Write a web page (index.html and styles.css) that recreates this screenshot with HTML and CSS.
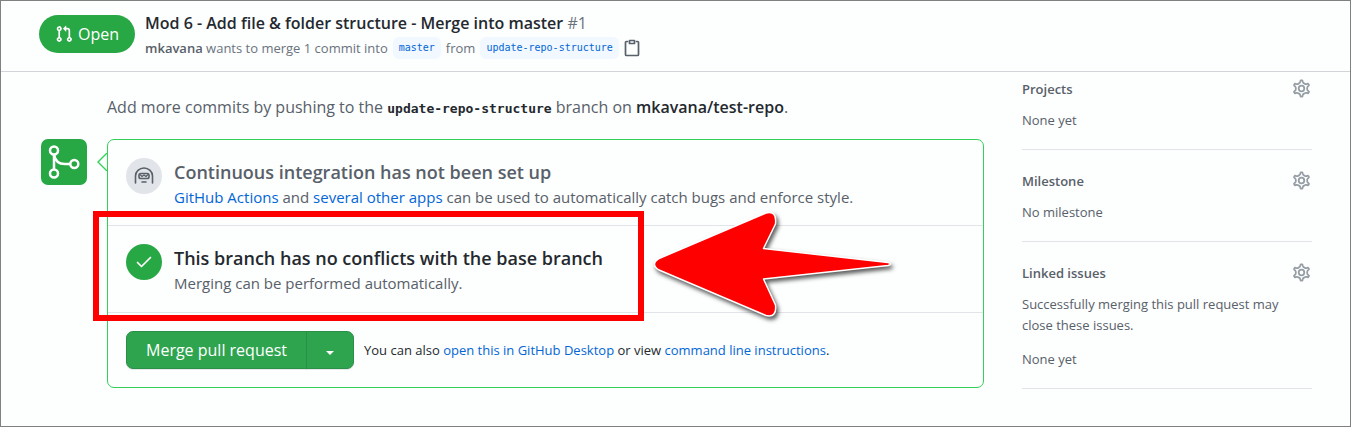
FILE: index.html
```html
<!DOCTYPE html>
<html lang="en">
<head>
<meta charset="utf-8">
<meta name="viewport" content="width=device-width, initial-scale=1">
<title>Mod 6 - Add file &amp; folder structure - Merge into master #1</title>
<link rel="stylesheet" href="styles.css">
</head>
<body>
<svg class="defs" aria-hidden="true">
  <symbol id="gear" viewBox="0.5 0.5 15 15">
    <path fill="none" stroke="currentColor" stroke-width="1.4" d="M7.429 1.525a6.593 6.593 0 011.142 0c.036.003.108.036.137.146l.289 1.105c.147.56.55.967.997 1.189.174.086.341.183.501.29.417.278.97.423 1.53.27l1.102-.303c.11-.03.175.016.195.046.219.31.41.641.573.989.014.031.022.11-.059.19l-.815.806c-.411.406-.562.957-.53 1.456a4.588 4.588 0 010 .582c-.032.499.119 1.05.53 1.456l.815.806c.08.08.073.159.059.19a6.494 6.494 0 01-.573.99c-.02.029-.086.074-.195.045l-1.103-.303c-.559-.153-1.112-.008-1.529.27-.16.107-.327.204-.5.29-.449.222-.851.628-.998 1.189l-.289 1.105c-.029.11-.101.143-.137.146a6.613 6.613 0 01-1.142 0c-.036-.003-.108-.037-.137-.146l-.289-1.105c-.147-.56-.55-.967-.997-1.189a4.502 4.502 0 01-.501-.29c-.417-.278-.97-.423-1.53-.27l-1.102.303c-.11.03-.175-.016-.195-.046a6.492 6.492 0 01-.573-.989c-.014-.031-.022-.11.059-.19l.815-.806c.411-.406.562-.957.53-1.456a4.587 4.587 0 010-.582c.032-.499-.119-1.05-.53-1.456l-.815-.806c-.08-.08-.073-.159-.059-.19a6.44 6.44 0 01.573-.99c.02-.029.086-.075.195-.045l1.103.303c.559.153 1.112.008 1.529-.27.16-.107.327-.204.5-.29.449-.222.851-.628.998-1.189l.289-1.105c.029-.11.101-.143.137-.146z"/>
    <circle cx="8" cy="8" r="2.2" fill="none" stroke="currentColor" stroke-width="1.4"/>
  </symbol>
</svg>
<div class="page">
  <header class="pr-header">
    <span class="state">
      <svg width="18" height="18" viewBox="0 0 16 16" fill="currentColor" aria-hidden="true"><path fill-rule="evenodd" d="M7.177 3.073L9.573.677A.25.25 0 0110 .854v4.792a.25.25 0 01-.427.177L7.177 3.427a.25.25 0 010-.354zM3.75 2.5a.75.75 0 100 1.5.75.75 0 000-1.5zm-2.25.75a2.25 2.25 0 113 2.122v5.256a2.251 2.251 0 11-1.5 0V5.372A2.25 2.25 0 011.5 3.25zM11 2.5h-1V4h1a1 1 0 011 1v5.628a2.251 2.251 0 101.5 0V5A2.5 2.5 0 0011 2.5zm1 10.25a.75.75 0 111.5 0 .75.75 0 01-1.5 0zM3.75 12a.75.75 0 100 1.5.75.75 0 000-1.5z"/></svg>
      Open
    </span>
    <div class="pr-summary">
      <h1 class="pr-title">Mod 6 - Add file &amp; folder structure - Merge into master <span class="pr-number">#1</span></h1>
      <div class="pr-meta">
        <span><a class="author" href="#">mkavana</a> wants to merge 1 commit into</span>
        <a class="branch" href="#">master</a>
        <span>from</span>
        <a class="branch" href="#">update-repo-structure</a>
        <button class="icon-button copy" type="button" aria-label="Copy branch name">
          <svg width="16" height="18" viewBox="0 0 16 18" fill="none" stroke="currentColor" stroke-width="1.7" stroke-linejoin="round" stroke-linecap="round" aria-hidden="true"><path d="M3.5 2.5H2.5Q1.5 2.5 1.5 3.5V15.5Q1.5 16.5 2.5 16.5H13.5Q14.5 16.5 14.5 15.5V3.5Q14.5 2.5 13.5 2.5H12.5"/><path d="M5.5 1.5H10.5V4.5H5.5Z"/></svg>
        </button>
      </div>
    </div>
  </header>
  <div class="columns">
    <main class="discussion">
      <p class="push-hint">Add more commits by pushing to the <code>update-repo-structure</code> branch on <a href="#">mkavana/test-repo</a>.</p>
      <div class="merge">
        <span class="merge-badge">
          <svg width="46" height="46" viewBox="0 0 46 46" fill="none" stroke="currentColor" stroke-width="2.5" aria-hidden="true"><circle cx="13" cy="11.5" r="4"/><circle cx="13" cy="34.5" r="4"/><circle cx="33.3" cy="25" r="4"/><path d="M13 15.5V30.5M13 15.5Q14.5 25 24 25H29.3"/></svg>
        </span>
        <section class="merge-box">
          <svg class="caret" width="10" height="18" viewBox="0 0 10 18" aria-hidden="true"><path d="M10 0L1 9L10 18" fill="#fdfefe" stroke="#34d058" stroke-width="1.4"/></svg>
          <div class="status compact">
            <span class="status-icon muted">
              <svg width="20" height="18" viewBox="0 0 20 18" fill="none" stroke="currentColor" stroke-width="1.6" stroke-linecap="round" stroke-linejoin="round" aria-hidden="true"><path d="M1.5 16V9A8 7.5 0 0 1 18.5 9V16"/><rect x="5" y="6.5" width="10" height="5" rx="1.8"/><path d="M6.5 8L8 9.5L10 8L12 9.5L13.5 8" stroke-width="1.3"/><path d="M8 15H12"/></svg>
            </span>
            <div>
              <h2 class="status-title soft">Continuous integration has not been set up</h2>
              <p class="status-text"><a href="#">GitHub Actions</a> and <a href="#">several other apps</a> can be used to automatically catch bugs and enforce style.</p>
            </div>
          </div>
          <div class="status marked">
            <span class="status-icon ok">
              <svg width="16" height="12" viewBox="0 0 16 12" fill="none" stroke="currentColor" stroke-width="1.7" stroke-linecap="round" stroke-linejoin="round" aria-hidden="true"><path d="M1.5 6.5L5.5 10.5L14.5 1.5"/></svg>
            </span>
            <div>
              <h2 class="status-title">This branch has no conflicts with the base branch</h2>
              <p class="status-text">Merging can be performed automatically.</p>
            </div>
            <span class="highlight"></span>
            <svg class="arrow" width="260" height="130" viewBox="0 0 260 130" aria-hidden="true"><path d="M18 58.500L125 13Q136 10 134.500 24L122.500 48.500L247 62.500Q252 64 247 65.500L122.500 79L134.500 105Q136 118 125 115.500L18 70Q9 64 18 58.500Z" fill="#f00" stroke="#fff" stroke-width="1.500" stroke-linejoin="round"/></svg>
          </div>
          <div class="merge-actions">
            <div class="button-group">
              <button class="merge-button" type="button">Merge pull request</button><button class="merge-button more" type="button" aria-label="Select merge method"><span class="triangle"></span></button>
            </div>
            <p class="alternatives">You can also <a href="#">open this in GitHub Desktop</a> or view <a href="#">command line instructions</a>.</p>
          </div>
        </section>
      </div>
    </main>
    <aside class="sidebar">
      <section class="side-item">
        <h3>Projects</h3>
        <button class="icon-button" type="button" aria-label="Edit projects"><svg width="19" height="19"><use href="#gear"/></svg></button>
        <p>None yet</p>
      </section>
      <section class="side-item">
        <h3>Milestone</h3>
        <button class="icon-button" type="button" aria-label="Edit milestone"><svg width="19" height="19"><use href="#gear"/></svg></button>
        <p>No milestone</p>
      </section>
      <section class="side-item">
        <h3>Linked issues</h3>
        <button class="icon-button" type="button" aria-label="Edit linked issues"><svg width="19" height="19"><use href="#gear"/></svg></button>
        <p>Successfully merging this pull request may close these issues.</p>
        <p>None yet</p>
      </section>
    </aside>
  </div>
</div>
</body>
</html>
```
FILE: styles.css
```css
* { box-sizing: border-box; }

body {
  margin: 0;
  color: #24292e;
  background: #fdfefe;
  font: 13px/21px "Open Sans", "Noto Sans", sans-serif;
}

h1, h2, h3, p { margin: 0; }
a { color: #0366d6; text-decoration: none; }
button { font: inherit; cursor: pointer; }
svg { display: block; flex: none; }

.defs { position: absolute; width: 0; height: 0; }

.page {
  min-height: 100vh;
  border: 1px solid #808080;
}

.pr-header {
  display: flex;
  align-items: flex-start;
  gap: 10px;
  padding: 11px 38px 12px;
  border-bottom: 1px solid #d1d5da;
}

.state {
  display: flex;
  align-items: center;
  gap: 5px;
  margin-top: 3px;
  padding: 8px 16px;
  border-radius: 20px;
  color: #fff;
  background: #28a745;
  font-size: 16px;
  line-height: 22px;
}

.pr-title {
  font-size: 16px;
  line-height: 22px;
  font-weight: 600;
}

.pr-number { color: #6a737d; font-weight: 400; }

.pr-meta {
  display: flex;
  align-items: center;
  gap: 5px;
  margin-top: 3px;
  color: #6a737d;
  line-height: 22px;
}

.author { color: #586069; font-weight: 600; }

.branch {
  padding: 0 6px;
  border-radius: 6px;
  background: #f1f8ff;
  font: 10px/22px "DejaVu Sans Mono", monospace;
}

.icon-button {
  padding: 0;
  border: 0;
  color: #959da5;
  background: none;
}

.pr-meta .copy { color: #586069; }

.columns {
  display: grid;
  grid-template-columns: minmax(0, 1fr) 290px;
  gap: 38px;
  padding: 0 38px 0 40px;
}

.push-hint {
  padding: 23px 0 20px 66px;
  color: #586069;
  font-size: 16px;
  line-height: 24px;
}

.push-hint code {
  color: #24292e;
  font: bold 13px "DejaVu Sans Mono", monospace;
}

.push-hint a { color: #24292e; font-weight: 600; }

.merge {
  display: flex;
  align-items: flex-start;
  gap: 20px;
}

.merge-badge {
  border-radius: 7px;
  color: #fff;
  background: #28a745;
}

.merge-box {
  position: relative;
  flex: 1;
  border: 1px solid #34d058;
  border-radius: 7px;
}

.caret {
  position: absolute;
  top: 13px;
  left: -11px;
}

.status {
  display: flex;
  gap: 12px;
  padding: 18px;
  border-bottom: 1px solid #e1e4e8;
}

.compact { padding-bottom: 17px; }

.status-icon {
  display: flex;
  align-items: center;
  justify-content: center;
  flex: none;
  width: 36px;
  height: 36px;
  border-radius: 50%;
}

.muted { color: #586069; background: #e1e4e8; }
.ok { color: #fff; background: #28a745; }

.status-title {
  font-size: 18px;
  line-height: 28px;
  font-weight: 600;
}

.soft { color: #586069; }

.status-text {
  color: #586069;
  font-size: 15px;
  line-height: 22px;
}

.marked { position: relative; }

.highlight {
  position: absolute;
  top: -15px;
  bottom: -9px;
  left: -15px;
  width: 551px;
  border: 6px solid #f00;
}

.arrow {
  position: absolute;
  top: -26px;
  left: 533px;
  filter: drop-shadow(2px 3px 2px rgb(0 0 0 / 65%));
}

.merge-actions {
  display: flex;
  align-items: center;
  gap: 10px;
  padding: 18px;
}

.button-group { display: flex; }

.merge-button {
  padding: 7px 19px;
  border: 1px solid #2a8f47;
  border-radius: 7px 0 0 7px;
  color: #fff;
  background: #2ea44f;
  box-shadow: 0 1px 0 rgb(27 31 35 / 10%);
  font-size: 16px;
  line-height: 22px;
}

.more {
  margin-left: -1px;
  border-radius: 0 7px 7px 0;
}

.triangle {
  display: block;
  margin-top: 6px;
  border: 4px solid transparent;
  border-top-color: #fff;
  border-bottom: 0;
}

.sidebar { color: #586069; }

.side-item {
  display: grid;
  grid-template-columns: 1fr auto;
  row-gap: 10px;
  padding: 21px 0 18px;
  border-bottom: 1px solid #e1e4e8;
}

.side-item:first-child { padding-top: 7px; }
.side-item h3 { font-size: 13px; font-weight: 600; }
.side-item p { grid-column: 1 / -1; }
.side-item p + p { margin-top: 3px; }
.side-item .icon-button { padding: 0 1px 4px 0; height: 21px; }
```
